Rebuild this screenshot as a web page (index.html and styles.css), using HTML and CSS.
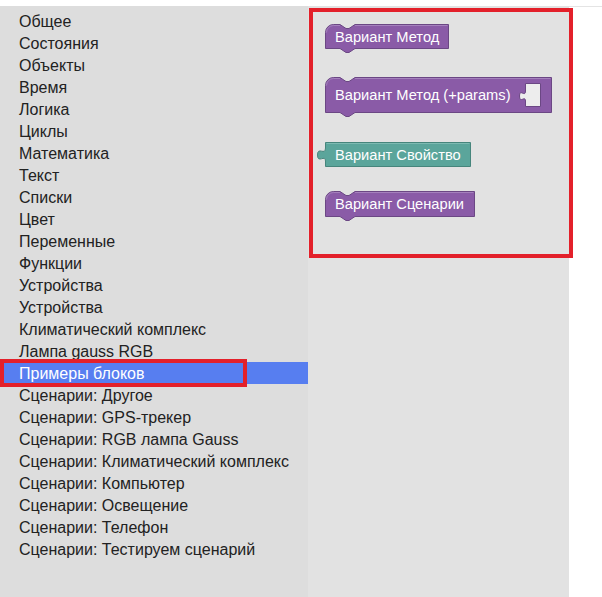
FILE: index.html
```html
<!DOCTYPE html>
<html lang="ru">
<head>
    <meta charset="UTF-8">
    <meta name="viewport" content="width=device-width, initial-scale=1.0">
    <title>Примеры блоков</title>
    <link rel="stylesheet" href="styles.css">
</head>
<body>
    <div class="app">
        <!-- Панель категорий -->
        <ul class="toolbox">
            <li>Общее</li>
            <li>Состояния</li>
            <li>Объекты</li>
            <li>Время</li>
            <li>Логика</li>
            <li>Циклы</li>
            <li>Математика</li>
            <li>Текст</li>
            <li>Списки</li>
            <li>Цвет</li>
            <li>Переменные</li>
            <li>Функции</li>
            <li>Устройства</li>
            <li>Устройства</li>
            <li>Климатический комплекс</li>
            <li>Лампа gauss RGB</li>
            <li class="selected">Примеры блоков<span class="mark mark-row"></span></li>
            <li>Сценарии: Другое</li>
            <li>Сценарии: GPS-трекер</li>
            <li>Сценарии: RGB лампа Gauss</li>
            <li>Сценарии: Климатический комплекс</li>
            <li>Сценарии: Компьютер</li>
            <li>Сценарии: Освещение</li>
            <li>Сценарии: Телефон</li>
            <li>Сценарии: Тестируем сценарий</li>
        </ul>

        <!-- Блоки выбранной категории -->
        <div class="flyout">
            <span class="mark mark-flyout"></span>

            <svg class="block" width="140" height="29" viewBox="0 0 140 29">
                <path class="purple" d="M10.5,8.5 A8,8 0 0 1 18.5,0.5 H25 l6,4 h3 l6,-4 H133.5 V24.5 H40 l-6,4 h-3 l-6,-4 H10.5 Z"/>
                <path class="hl-purple" d="M11.5,8.5 A7,7 0 0 1 18.5,1.5 H25 M40,1.5 H132.5"/>
                <text x="20" y="17.5">Вариант Метод</text>
            </svg>

            <svg class="block" width="242" height="40" viewBox="0 0 242 40">
                <path class="purple" d="M10.5,8.5 A8,8 0 0 1 18.5,0.5 H25 l6,4 h3 l6,-4 H236.5 V35.5 H40 l-6,4 h-3 l-6,-4 H10.5 Z"/>
                <path class="hl-purple" d="M11.5,8.5 A7,7 0 0 1 18.5,1.5 H25 M40,1.5 H235.5"/>
                <path class="hole" d="M210.5,6.5 H225.5 V29.5 H210.5 V24 c0,-6 -6,3 -6,-5 s6,2 6,-5 Z"/>
                <text x="20" y="23">Вариант Метод (+params)</text>
            </svg>

            <svg class="block block-value" width="160" height="25" viewBox="0 0 160 25">
                <path class="teal" d="M10.5,0.5 H155.5 V24.5 H10.5 V19 c0,-7 -8,3 -8,-6 s8,1 8,-7 Z"/>
                <path class="hl-teal" d="M11.5,1.5 H154.5"/>
                <text x="20" y="17.5">Вариант Свойство</text>
            </svg>

            <svg class="block" width="166" height="30" viewBox="0 0 166 30">
                <path class="purple" d="M10.5,8.5 A8,8 0 0 1 18.5,0.5 H25 l6,4 h3 l6,-4 H159.5 V25.5 H40 l-6,4 h-3 l-6,-4 H10.5 Z"/>
                <path class="hl-purple" d="M11.5,8.5 A7,7 0 0 1 18.5,1.5 H25 M40,1.5 H158.5"/>
                <text x="20" y="18">Вариант Сценарии</text>
            </svg>
        </div>
    </div>
</body>
</html>
```

FILE: styles.css
```css
body {
    margin: 0;
    padding: 0;
    background-color: #fff;
    font-family: 'Liberation Sans', Arial, sans-serif;
    color: #222;
}

.app {
    display: flex;
    margin-top: 6px;
    height: 591px;
    border-top: 1px solid #e4e4e4;
    box-sizing: border-box;
}

.toolbox {
    width: 308px;
    margin: -1px 0 0 0;
    padding: 4px 0 0 0;
    list-style: none;
    background-color: #ddd;
}

.toolbox li {
    height: 21px;
    padding-top: 1px;
    line-height: 22px;
    padding-left: 19px;
    font-size: 16px;
    white-space: nowrap;
}

.toolbox li.selected {
    position: relative;
    background-color: #577ef0;
    color: #fff;
}

.flyout {
    position: relative;
    width: 261px;
    margin-top: -1px;
    padding: 18px 0 0 7px;
    box-sizing: border-box;
    background-color: #e2e2e2;
    display: flex;
    flex-direction: column;
    align-items: flex-start;
    gap: 24px;
}

.block {
    display: block;
}

.block-value {
    margin-top: 1px;
}

.block text {
    font-family: 'Liberation Sans', Arial, sans-serif;
    font-size: 11pt;
    fill: #fff;
}

.purple {
    fill: #8a5ba7;
    stroke: #6b4784;
    stroke-width: 1;
}

.hl-purple {
    fill: none;
    stroke: #a581bd;
    stroke-width: 1;
}

.teal {
    fill: #5ba59b;
    stroke: #46857c;
    stroke-width: 1;
}

.hl-teal {
    fill: none;
    stroke: #7dbab2;
    stroke-width: 1;
}

.hole {
    fill: #ededed;
    stroke: #6b4784;
    stroke-width: 1;
}

/* красные рамки-пометки поверх интерфейса */
.mark {
    position: absolute;
    border: 4px solid #e3202a;
    box-sizing: border-box;
    pointer-events: none;
}

.mark-row {
    left: 0;
    top: -3px;
    width: 247px;
    height: 28px;
}

.mark-flyout {
    left: 1px;
    top: 2px;
    width: 264px;
    height: 250px;
}
```
